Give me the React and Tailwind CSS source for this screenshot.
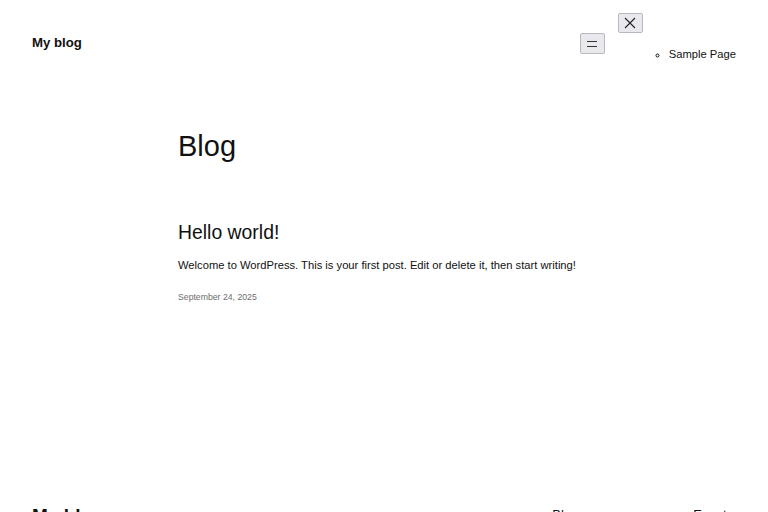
import React from "react";

function MenuIcon() {
  return (
    <svg width="12" height="8" viewBox="0 0 12 8" fill="none">
      <path d="M1 1.5h10M1 6.5h10" stroke="#333" strokeWidth="1.2" />
    </svg>
  );
}

function CloseIcon() {
  return (
    <svg width="12" height="12" viewBox="0 0 12 12" fill="none">
      <path d="M1 1l10 10M11 1L1 11" stroke="#222" strokeWidth="1.1" />
    </svg>
  );
}

export default function App() {
  return (
    <div className="min-h-screen bg-white text-[#111] font-['Liberation_Sans',Arial,sans-serif] overflow-hidden">
      {/* Header */}
      <header className="flex items-start justify-between px-8">
        <div className="mt-[34px] text-[13.2px] leading-[18px] font-bold">My blog</div>
        <div className="flex items-start">
          <button className="mt-[33px] flex h-[21px] w-[25px] items-center justify-center rounded-[2px] border border-[#b8b8c0] bg-[#e9e9ed]">
            <MenuIcon />
          </button>
          <div className="ml-[13px]">
            <button className="mt-[13px] flex h-[20px] w-[25px] items-center justify-center rounded-[2px] border border-[#b8b8c0] bg-[#e9e9ed]">
              <CloseIcon />
            </button>
            <ul className="mt-[13px] list-[circle] pl-[51px] text-[11.2px] leading-[16px]">
              <li>Sample Page</li>
            </ul>
          </div>
        </div>
      </header>

      {/* Main */}
      <main className="pl-[178px]">
        <h1 className="mt-[67px] text-[29px] leading-[35px]">Blog</h1>
        <h2 className="mt-[56px] text-[19.4px] leading-[24px]">Hello world!</h2>
        <p className="mt-[13px] text-[11.2px] leading-[16px]">
          Welcome to WordPress. This is your first post. Edit or delete it, then start writing!
        </p>
        <div className="mt-[18px] text-[8.7px] leading-[12px] text-[#6e6e6e]">September 24, 2025</div>
      </main>

      {/* Footer */}
      <footer className="mt-[201px] flex items-start px-8">
        <div className="text-[19px] leading-[24px] font-bold">My blog</div>
        <div className="ml-auto mt-[2px] flex text-[13px] leading-[18px]">
          <div className="w-[141px]">Blog</div>
          <div className="pr-[3px]">Events</div>
        </div>
      </footer>
    </div>
  );
}
